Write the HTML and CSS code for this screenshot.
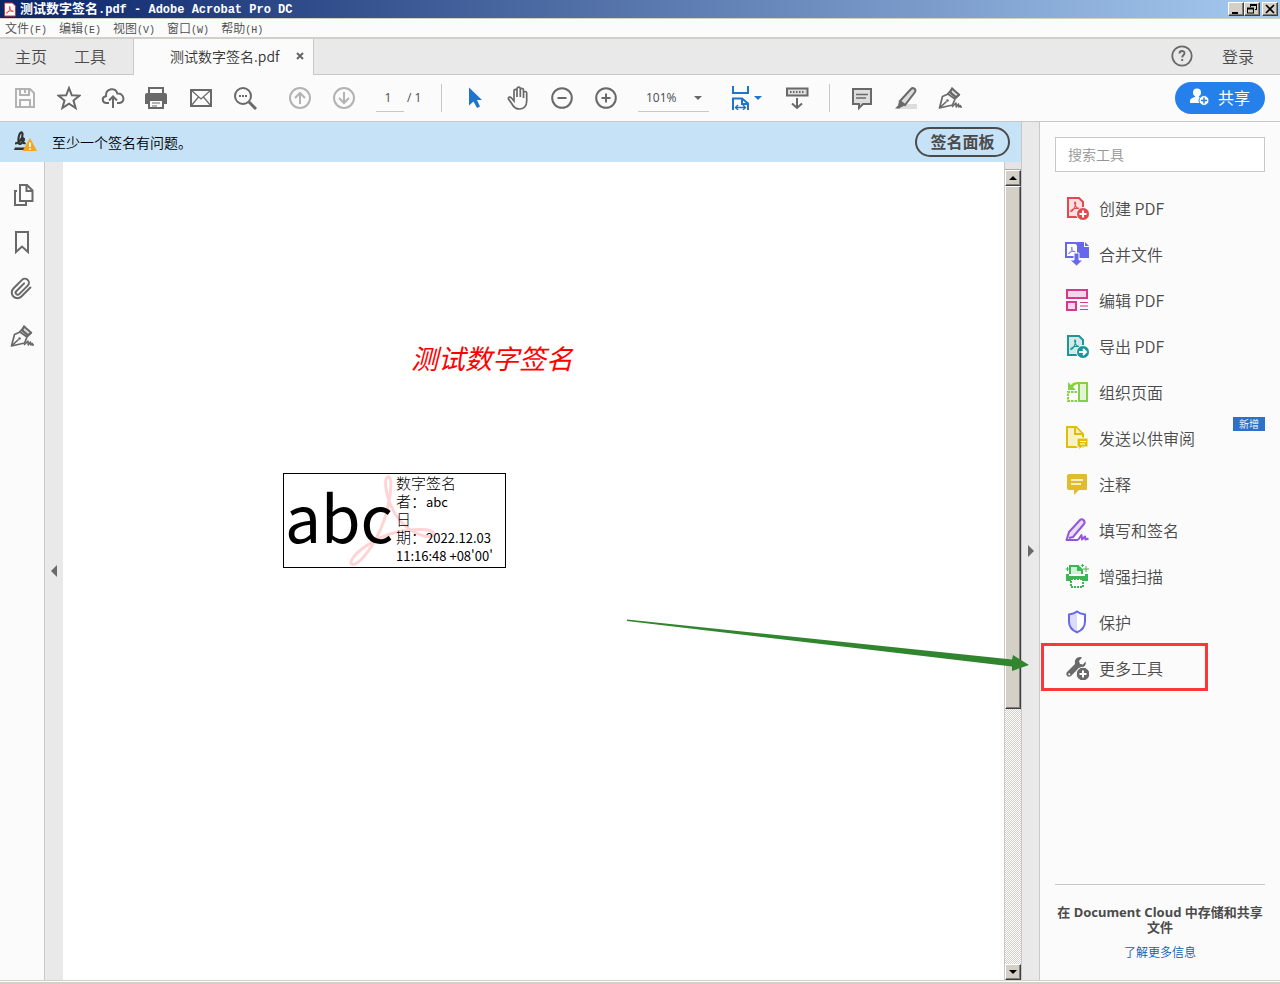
FILE: index.html
```html
<!DOCTYPE html>
<html lang="zh-CN">
<head>
<meta charset="utf-8">
<title>测试数字签名.pdf - Adobe Acrobat Pro DC</title>
<link rel="stylesheet" href="styles.css">
</head>
<body>
<svg class="defs" aria-hidden="true">
  <symbol id="acro" viewBox="0 0 10 10"><path d="M4.600.6c.9 0 .6 2.600-.4 4.600C3.200 7.200 1.600 9.200.8 9c-.8-.6 1.400-2.200 4-2.700 2-.4 4.200-.3 4.300.4.100.8-2-.1-3.200-1.400C4.700 3.900 3.700.7 4.600.6z" fill="none" stroke="currentColor"/></symbol>
  <symbol id="pen" viewBox="0 0 24 24"><path d="M14 2.500l7 6-3 3-6-5z" fill="#ddd"/><path d="M1.500 22l3-11.500L10 8l7 5-2.500 6zM2 21.500l6.500-6M9.500 8L15 2M12 6l6.500 5.500M16.500 13l5-4.500" fill="none" stroke="#696969" stroke-width="1.700" stroke-linejoin="round"/><path d="M14 21l4-4 .2 4 2.300-3 .3 3 1.500-1.500.3 1.500H24" fill="none" stroke="#696969" stroke-width="1.600" stroke-linejoin="round"/><circle cx="9.500" cy="14.500" r="1.300" fill="#696969" stroke="none"/></symbol>
</svg>

<header>
  <div class="titlebar">
    <svg class="app-icon" viewBox="0 0 12 14"><path d="M.5.5h8l3 3v10H.5z" fill="#fff" stroke="#d33"/><use href="#acro" x="2" y="3" width="8" height="9" color="#e22"/></svg>
    <h1>测试数字签名<span>.pdf - Adobe Acrobat Pro DC</span></h1>
    <div class="window-buttons">
      <button class="bevel" aria-label="最小化"><svg viewBox="0 0 12 10"><path d="M2 8h6v2H2z"/></svg></button>
      <button class="bevel" aria-label="还原"><svg viewBox="0 0 12 10"><path d="M4 0h7v6H9V5h1V2H5v1H4zM1 3.500h7v6H1zm1 2v3h5v-3z" fill-rule="evenodd"/></svg></button>
      <button class="bevel close" aria-label="关闭"><svg viewBox="0 0 12 10"><path d="M2 1l8 8M10 1L2 9" stroke="#000" stroke-width="1.700"/></svg></button>
    </div>
  </div>
  <nav class="menubar">
    <button>文件<span>(F)</span></button><button>编辑<span>(E)</span></button><button>视图<span>(V)</span></button><button>窗口<span>(W)</span></button><button>帮助<span>(H)</span></button>
  </nav>
  <div class="tabs">
    <div class="tabs-home"><button>主页</button><button>工具</button></div>
    <div class="tab-active"><span>测试数字签名.pdf</span><button aria-label="关闭标签"><svg viewBox="0 0 8 8"><path d="M1 1l6 6M7 1L1 7" stroke="#666" stroke-width="2"/></svg></button></div>
    <div class="tabs-end">
      <button class="help" aria-label="帮助"><svg viewBox="0 0 22 22"><circle cx="11" cy="11" r="9.700" fill="none" stroke="#6a6a6a" stroke-width="1.800"/><path d="M8.500 8.500c0-3.300 5-3.100 5-.3 0 1.800-2.300 1.900-2.300 4.300M11.200 14v2" fill="none" stroke="#6a6a6a" stroke-width="1.900"/></svg></button>
      <button>登录</button>
    </div>
  </div>
</header>

<div class="toolbar">
  <button class="tool" aria-label="保存"><svg class="faint" viewBox="0 0 24 24"><path d="M3 3h14l4 4v14H3zM7 3v6h9V3M7 21v-7h10v7" /><path d="M12 4v3"/></svg></button>
  <button class="tool" aria-label="收藏"><svg viewBox="0 0 24 24"><path d="M12 2l2.800 7.300 7.700.3-6 4.900 2.100 7.500-6.600-4.300L5.400 22l2.100-7.500-6-4.900 7.700-.3z"/></svg></button>
  <button class="tool" aria-label="上传"><svg viewBox="0 0 24 24"><path d="M8 17H5.500C1 17 .3 10.800 5 10.200 4.500 2 15 .8 16.300 7.500c7.200-.6 8.300 9.500 2 9.500H16M12 22V10.500M8 14.500l4-4 4 4"/></svg></button>
  <button class="tool" aria-label="打印"><svg viewBox="0 0 24 24"><path d="M4 7V2h14v5" /><path d="M0 9q0-2 2-2h18q2 0 2 2v9h-4v-4H4v4H0z" fill="#696969" stroke="none"/><path d="M4 14h14v8H4z" fill="#fff"/><path d="M7 17h8M7 20h5" stroke-width="1"/></svg></button>
  <button class="tool" aria-label="邮件"><svg viewBox="0 0 24 24"><path d="M2 4h20v16H2z"/><path d="M2 4l10 9 10-9M2 20l7.500-9M22 20l-7.500-9" stroke-width="1.200"/></svg></button>
  <button class="tool search" aria-label="查找"><svg viewBox="0 0 24 24"><circle cx="10" cy="10" r="8"/><path d="M16 16l7 7" stroke-width="3"/><path d="M6 10h2m1 0h2m1 0h2" /></svg></button>
  <button class="tool" aria-label="上一页"><svg class="faint" viewBox="0 0 24 24"><circle cx="12" cy="12" r="10"/><path d="M12 18V7M7 12l5-5 5 5"/></svg></button>
  <button class="tool" aria-label="下一页"><svg class="faint" viewBox="0 0 24 24"><circle cx="12" cy="12" r="10"/><path d="M12 6v11M7 12l5 5 5-5"/></svg></button>
  <label class="page-no"><input type="text" value="1" aria-label="页码"><span>/ 1</span></label>
  <i class="sep"></i>
  <button class="tool" aria-label="选择"><svg viewBox="0 0 24 24"><path d="M7 1.500v18l4.500-4 3.500 6.500 3-1.500-3-6.500h5z" fill="#1f74cc" stroke="none"/></svg></button>
  <button class="tool" aria-label="抓手"><svg viewBox="0 0 24 24"><path d="M8 12V5c0-2.300 3-2.300 3 0v6V3c0-2.500 3.300-2.500 3.300 0v8V4c0-2.200 3.200-2.200 3.200 0v8V7c0-2 3.200-2 3.200 0v8c0 5-3 8-7.200 8-4 0-6-2-7.500-5L2.500 13c-.6-2 1.700-2.700 3-1l2.500 3z" stroke-width="1.700"/></svg></button>
  <button class="tool" aria-label="缩小"><svg viewBox="0 0 24 24"><circle cx="12" cy="12" r="9.800"/><path d="M7.500 12h9"/></svg></button>
  <button class="tool" aria-label="放大"><svg viewBox="0 0 24 24"><circle cx="12" cy="12" r="9.800"/><path d="M7.500 12h9M12 7.500v9"/></svg></button>
  <div class="zoom"><select aria-label="缩放比例"><option>101%</option></select></div>
  <button class="tool fit" aria-label="适合宽度"><svg viewBox="0 0 24 24"><path d="M4 0v7h15V0M4 24V12.500h9l6 5V24M13 12.500V18h6" stroke="#1f74cc"/><path d="M6.500 21.500h10M9 19l-2.500 2.500L9 24M14 19l2.500 2.500L14 24" stroke="#1f74cc" stroke-width="1.400"/></svg></button>
  <button class="tool" aria-label="工具栏"><svg viewBox="0 0 24 24"><path d="M2 2.500h20.500v7H2z" fill="#ddd"/><path d="M5 6h15" stroke-dasharray="1.500 1.500"/><path d="M12 12v10M7 17.500l5 4.500 5-4.500"/></svg></button>
  <i class="sep"></i>
  <button class="tool" aria-label="注释"><svg viewBox="0 0 24 24"><path d="M3 3h18v15h-8l-4 4v-4H3z" fill="#ddd"/><path d="M6 8.500h12M6 12h10" stroke-width="1.300"/></svg></button>
  <button class="tool" aria-label="荧光笔"><svg viewBox="0 0 24 24"><path d="M8 18h15v5H3z" fill="#ddd" stroke="none"/><path d="M6 15L17 3c2-2 5.500 0 4 3L11 19z" fill="#ddd"/><path d="M5 15l6 4-3 2-1 0-1.500 1.500H1l3-3z" fill="#696969" stroke="none"/></svg></button>
  <button class="tool" aria-label="签名"><svg viewBox="0 0 24 24"><use href="#pen"/></svg></button>
  <button class="share"><svg viewBox="0 0 20 18"><circle cx="7" cy="4.500" r="4"/><path d="M0 13.500c0-3 2-3.500 5-4.500V7h4v2l3 1-2 5H0z"/><circle cx="14" cy="12.500" r="5" stroke="#2680eb"/><path d="M11 12.500h6M14 9.500v6" stroke="#2680eb" stroke-width="1.500"/></svg>共享</button>
</div>

<div class="workspace">
  <main>
    <div class="notice">
      <svg viewBox="0 0 24 24"><path d="M2 17.500h12v2.500H1z" fill="#333"/><path d="M2 13.500c4 0 8-5 7.500-9.500C9 .5 6 3 5.500 8s.5 7 2.500 5.500 4-4.500 2.500-5-1.500 6 2 4.500" fill="none" stroke="#333" stroke-width="2.200"/><path d="M17 8l7 13H9.500z" fill="#f8a51b"/><path d="M17 12.500v4.500M17 18.200v1.500" stroke="#fff" stroke-width="1.800"/></svg>
      <p>至少一个签名有问题。</p>
      <button>签名面板</button>
    </div>
    <div class="viewer">
      <nav class="rail">
        <button aria-label="页面"><svg viewBox="0 0 24 24"><path d="M7 8H5v14h11v-3"/><path d="M10 2h7l5.500 5.500V18H10zM16.500 2v6h6" fill="#fbfbfb"/></svg></button>
        <button aria-label="书签"><svg viewBox="0 0 24 24"><path d="M6 2h12v20l-6-5.500L6 22z"/></svg></button>
        <button aria-label="附件"><svg viewBox="0 0 24 24"><path d="M20.400 10.500l-9 9a5.600 5.600 0 0 1-8-8l8.600-8.600a4 4 0 0 1 5.700 5.700l-8.500 8.500a2 2 0 0 1-2.900-2.900l7.800-7.800" stroke-linecap="round"/></svg></button>
        <button aria-label="签名"><svg viewBox="0 0 24 24"><use href="#pen"/></svg></button>
      </nav>
      <button class="gutter" aria-label="折叠导航窗格"><svg viewBox="0 0 6 12"><path d="M6 0v12L0 6z"/></svg></button>
      <article class="page">
        <h2>测试数字签名</h2>
        <section class="signature">
          <svg class="mark" viewBox="0 0 90 94"><path d="M40 3c6-2 2 32-8 54S8 94 3 91c-4-6 20-27 49-33 16-3 35-3 34 3-2 6-22 0-34-14C39 32 34 4 40 3z" fill="none" stroke="#ffd4d4" stroke-width="3"/></svg>
          <strong>abc</strong>
          <p><span>数字签名</span><br><span>者：</span>abc<br><span>日</span><br><span>期：</span>2022.12.03<br>11:16:48 +08'00'</p>
        </section>
      </article>
      <div class="scrollbar">
        <i class="splitter"></i>
        <button class="bevel" aria-label="向上滚动"><svg viewBox="0 0 8 4"><path d="M4 0l4 4H0z"/></svg></button>
        <i class="bevel thumb"></i>
        <i class="track"></i>
        <button class="bevel" aria-label="向下滚动"><svg viewBox="0 0 8 4"><path d="M0 0h8L4 4z"/></svg></button>
      </div>
    </div>
  </main>
  <button class="gutter right" aria-label="折叠工具窗格"><svg viewBox="0 0 6 12"><path d="M0 0v12l6-6z"/></svg></button>
  <aside>
    <input class="tool-search" type="search" placeholder="搜索工具" aria-label="搜索工具">
    <ul class="tool-list">
      <li><button><svg viewBox="0 0 24 24"><path d="M3 2h11l4 4v15H3z" fill="#fae0e0" stroke="#e34850" stroke-width="2"/><use href="#acro" x="5" y="5" width="11" height="12" color="#e34850"/><circle cx="18" cy="18" r="6.500" fill="#e34850" stroke="#fbfbfb"/><path d="M14.500 18h7M18 14.500v7" stroke="#fff" stroke-width="2"/></svg>创建 PDF</button></li>
      <li><button><svg viewBox="0 0 24 24"><path d="M1 1h10l2 2v12H1z" fill="#fff" stroke="#6767ec" stroke-width="2"/><path d="M12 0h7v5h5v11H13zM20 0l4 4h-4z" fill="#6767ec"/><use href="#acro" x="3" y="4" width="8" height="9" color="#6767ec"/><path d="M9 11h5v7h4l-6.500 6L5 18h4z" fill="#6767ec" stroke="#fbfbfb"/></svg>合并文件</button></li>
      <li><button><svg viewBox="0 0 24 24"><path d="M2 2h20v8H2zM2 14h9v8H2z" fill="#f6d5e9" stroke="#d83790" stroke-width="2"/><path d="M15 14.500h8M15 18h8M15 21.500h8" stroke="#d83790"/></svg>编辑 PDF</button></li>
      <li><button><svg viewBox="0 0 24 24"><path d="M3 2h11l4 4v15H3z" fill="#d4e9e8" stroke="#1b959a" stroke-width="2"/><use href="#acro" x="5" y="5" width="11" height="12" color="#1b959a"/><circle cx="18" cy="18" r="6.500" fill="#1b959a" stroke="#fbfbfb"/><path d="M14 18h7M18 15l3 3-3 3" fill="none" stroke="#fff" stroke-width="2"/></svg>导出 PDF</button></li>
      <li><button><svg viewBox="0 0 24 24"><path d="M14 3h8v18h-8z" fill="#e3f3d6" stroke="#85d044" stroke-width="2"/><path d="M12 12H3v9h9" fill="none" stroke="#85d044" stroke-width="2" stroke-dasharray="2.500 1"/><path d="M3 2v8h8L8 7q2-3 5-3V2Q8 2 6 5z" fill="#85d044"/></svg>组织页面</button></li>
      <li><button><svg viewBox="0 0 24 24"><path d="M2 1h9l7 7v13H2z" fill="#f8f0c6" stroke="#dfbf00" stroke-width="2"/><path d="M10 1v7h7" fill="#f8f0c6" stroke="#dfbf00" stroke-width="2"/><path d="M12 12h11v9h-6l-3 3v-3h-2z" fill="#dfbf00" stroke="#fbfbfb"/><path d="M15 15.500h6M15 18h5" stroke="#fff"/></svg>发送以供审阅</button><span class="badge">新增</span></li>
      <li><button><svg viewBox="0 0 24 24"><path d="M4 2h17q1 0 1 1v14q0 1-1 1h-7l-5 5v-5H4q-2 0-2-2V3z" fill="#e0be2b"/><path d="M6 8h12M6 12h10" stroke="#fff" stroke-width="1.600"/></svg>注释</button></li>
      <li><button><svg viewBox="0 0 24 24"><path d="M1.500 22l2.500-8L15 2c2-2 6 1 4 4L8 19z" fill="#eadcf8"/><path d="M13 22H1.500l2.500-8L15 2c2-2 6 1 4 4L8 19l-4 1M13 22l3.500-5 .5 4.500 3-3 .5 3 3-1" fill="none" stroke="#9256d9" stroke-width="2" stroke-linejoin="round"/></svg>填写和签名</button></li>
      <li><button><svg viewBox="0 0 24 24"><path d="M5 10V2h8l4 4v4" fill="#d4edda" stroke="#3eb553" stroke-width="2"/><path d="M12 2v5h5z" fill="#3eb553"/><path d="M1 10h3v2h16v-2h3v7H1z" fill="#3eb553"/><path d="M6 15h12v8H6z" fill="#fff" stroke="#3eb553" stroke-width="2" stroke-dasharray="2 1"/><path d="M21 2v6M18 5h6M2.500 3v4M.5 5h4M17.500 0v3M16 1.500h3" stroke="#3eb553"/></svg>增强扫描</button></li>
      <li><button><svg viewBox="0 0 24 24"><path d="M12 1.500c2.500 2 5 2.500 8 3v7c0 5-3.500 9-8 10.800C7.500 20.500 4 16.500 4 11.500v-7c3-.5 5.500-1 8-3z" fill="#fff"/><path d="M12 1.500v20.800C7.500 20.500 4 16.500 4 11.500v-7z" fill="#dcdcfa"/><path d="M12 1.500c2.500 2 5 2.500 8 3v7c0 5-3.500 9-8 10.800C7.500 20.500 4 16.500 4 11.500v-7c3-.5 5.500-1 8-3z" fill="none" stroke="#6767ec" stroke-width="2"/></svg>保护</button></li>
      <li class="more"><button><svg viewBox="0 0 24 24"><path d="M2 16l8-8c-1-5 3-8 7-6.500L14 5l1 3 3 .5 2.500-3C22 9 18 13 14 12l-8 8c-3 2-6-1-4-4z" fill="#696969"/><circle cx="4.300" cy="18.300" r="1" fill="#fff"/><circle cx="18" cy="18" r="6.800" fill="#696969" stroke="#fbfbfb"/><path d="M14.500 18h7M18 14.500v7" stroke="#fff" stroke-width="2"/></svg>更多工具</button>
        <i class="highlight"></i>
        <svg class="arrow" viewBox="0 0 402 55"><path d="M0 .5l385 40 1-4.500 16 10-17 6v-4.500L0 2z" fill="#31852f"/></svg>
      </li>
    </ul>
    <footer>
      <p>在 Document Cloud 中存储和共享文件</p>
      <a href="#">了解更多信息</a>
    </footer>
  </aside>
</div>
<div class="window-edge"></div>
</body>
</html>
```
FILE: styles.css
```css
* { box-sizing: border-box; }
body {
  margin: 0;
  height: 100vh;
  display: flex;
  flex-direction: column;
  background: #fbfbfb;
  color: #4b4b4b;
  font: 350 16px/24px "Noto Sans CJK SC", sans-serif;
  overflow: hidden;
}
button { padding: 0; border: 0; background: none; color: inherit; font: inherit; white-space: nowrap; }
svg { display: block; flex: none; }
h1, h2, p, ul { margin: 0; padding: 0; }
.defs { position: absolute; width: 0; height: 0; }

.titlebar {
  display: flex;
  align-items: center;
  height: 19px;
  padding: 0 2px 0 4px;
  background: linear-gradient(90deg, #0a246a, #a6caf0);
  border-bottom: 1px solid #d4d0c8;
}
.app-icon { width: 12px; height: 15px; }
.titlebar h1 { flex: 1; margin-left: 4px; color: #fff; font-size: 13px; line-height: 18px; }
.titlebar h1 span { font-family: "Liberation Mono", monospace; font-size: 12px; }
.window-buttons { display: flex; }
.bevel {
  display: flex;
  align-items: center;
  justify-content: center;
  background: #d4d0c8;
  border: 1px solid;
  border-color: #fff #404040 #404040 #fff;
  box-shadow: inset -1px -1px #808080;
}
.window-buttons .bevel { width: 16px; height: 14px; }
.window-buttons svg { width: 12px; height: 10px; }
.window-buttons .close { margin-left: 2px; }

.menubar {
  display: flex;
  gap: 12px;
  height: 20px;
  padding-left: 5px;
  border-bottom: 2px solid #d0cfc8;
  font-size: 12px;
  line-height: 18px;
}
.menubar span { font-family: "Liberation Mono", monospace; font-size: 10px; }

.tabs { display: flex; height: 36px; background: #e9e9e9; }
.tabs-home { display: flex; gap: 27px; width: 133px; padding-left: 15px; padding-bottom: 2px; border-bottom: 1px solid #c8c8c8; }
.tab-active {
  display: flex;
  align-items: center;
  justify-content: space-between;
  width: 181px;
  padding: 0 9px 2px 36px;
  background: #fbfbfb;
  border: solid #c8c8c8;
  border-width: 0 1px;
  color: #333;
  font-size: 14px;
}
.tab-active svg { width: 8px; height: 8px; }
.tabs-end {
  flex: 1;
  display: flex;
  align-items: center;
  justify-content: flex-end;
  gap: 29px;
  padding: 0 26px 2px 0;
  border-bottom: 1px solid #c8c8c8;
}
.help svg { width: 22px; height: 22px; }

.toolbar {
  display: flex;
  align-items: center;
  gap: 20px;
  height: 47px;
  flex: none;
  padding: 0 15px 0 13px;
  border-bottom: 1px solid #c8c8c8;
  font: 12px/24px "Open Sans", sans-serif;
}
.tool { flex: none; }
.tool svg { width: 24px; height: 24px; fill: none; stroke: #696969; stroke-width: 2; }
.tool .faint { stroke: #b3b3b3; }
.search { margin-right: 11px; }
.page-no { display: flex; gap: 3px; width: 45px; }
.page-no input {
  width: 28px;
  height: 28px;
  padding: 0 4px 0 0;
  border: 0;
  border-bottom: 1px solid #c8c8c8;
  background: none;
  color: inherit;
  font: inherit;
  text-align: center;
}
.page-no span { line-height: 28px; white-space: nowrap; }
.sep { width: 1px; height: 28px; background: #c8c8c8; }
.zoom { position: relative; width: 71px; border-bottom: 1px solid #c8c8c8; }
.zoom select {
  width: 100%;
  height: 27px;
  padding: 0 8px;
  border: 0;
  appearance: none;
  background: none;
  color: inherit;
  font: inherit;
}
.zoom::after, .fit::after { content: ""; border: 4px solid transparent; border-top-color: #696969; border-bottom: 0; }
.zoom::after { position: absolute; right: 7px; top: 12px; pointer-events: none; }
.fit { display: flex; align-items: center; justify-content: space-between; width: 36px; }
.fit::after { border-top-color: #1f74cc; margin-right: 3px; }
.share {
  display: flex;
  align-items: center;
  justify-content: center;
  gap: 8px;
  width: 90px;
  height: 32px;
  padding-bottom: 2px;
  margin-left: auto;
  border-radius: 16px;
  background: #2680eb;
  color: #fff;
  font: 400 16px/24px "Noto Sans CJK SC", sans-serif;
}
.share svg { width: 20px; height: 18px; fill: #fff; }

.workspace { flex: 1; display: flex; min-height: 0; }
main { flex: 1; display: flex; flex-direction: column; min-width: 0; }
.notice {
  display: flex;
  align-items: center;
  height: 40px;
  padding: 0 11px 0 13px;
  background: #c6e2f7;
  color: #000;
  font-size: 14px;
}
.notice svg { width: 24px; height: 24px; margin-right: 15px; }
.notice p { flex: 1; }
.notice button {
  width: 95px;
  height: 30px;
  padding-bottom: 2px;
  border: 2px solid #4b4b4b;
  border-radius: 15px;
  color: #4b4b4b;
  font-size: 16px;
  font-weight: 700;
}
.viewer { flex: 1; display: flex; min-height: 0; }
.rail {
  display: flex;
  flex-direction: column;
  gap: 23px;
  width: 44px;
  padding: 21px 10px;
}
.rail svg { width: 24px; height: 24px; fill: none; stroke: #696969; stroke-width: 2; }
.gutter {
  display: flex;
  align-items: center;
  justify-content: center;
  width: 19px;
  background: #e9e9e9;
  border-left: 1px solid #c8c8c8;
}
.gutter svg { width: 6px; height: 12px; fill: #696969; }
.gutter.right { border-right: 1px solid #c8c8c8; }
.page { flex: 1; padding-top: 180px; background: #fff; }
.page h2 { margin-left: 348px; color: #f00; font-size: 27px; font-style: italic; font-weight: 400; line-height: 32px; }
.signature {
  position: relative;
  display: flex;
  width: 223px;
  height: 95px;
  margin: 99px 0 0 220px;
  border: 1px solid #000;
  color: #000;
}
.signature strong { position: relative; width: 112px; padding-left: 1px; font-size: 64px; font-weight: 400; line-height: 82px; }
.signature p { position: relative; padding-top: 1px; font-size: 13px; font-weight: 400; line-height: 18px; white-space: nowrap; }
.signature p span { font-family: "Liberation Sans", "Noto Sans CJK SC", sans-serif; font-size: 15px; font-weight: 300; line-height: 0; }
.mark { position: absolute; left: 64px; top: 0; width: 90px; height: 93px; }

.scrollbar { display: flex; flex-direction: column; width: 17px; border-left: 1px solid #c8c8c8; }
.scrollbar svg { width: 8px; height: 4px; }
.scrollbar button { height: 16px; flex: none; }
.splitter { height: 8px; background: #e4e4e4; border-bottom: 1px solid #aaa; }
.thumb { flex: 522; }
.track { flex: 256; background: repeating-conic-gradient(#d4d0c8 0 25%, #fff 0 50%) 0 0 / 2px 2px; }

aside { display: flex; flex-direction: column; width: 240px; padding: 15px; }
.tool-search {
  width: 100%;
  height: 35px;
  padding: 0 12px 2px;
  border: 1px solid #c8c8c8;
  background: #fff;
  font: 350 14px "Noto Sans CJK SC", sans-serif;
}
.tool-search::placeholder { color: #959595; }
.tool-list { margin-top: 13px; list-style: none; }
.tool-list li { position: relative; height: 46px; }
.tool-list button { display: flex; align-items: center; gap: 10px; width: 100%; height: 46px; padding: 0 0 1px 10px; }
.tool-list button svg { width: 24px; height: 24px; }
.badge {
  position: absolute;
  right: 0;
  top: 2px;
  width: 32px;
  background: #2c72cb;
  color: #fff;
  font-size: 10px;
  line-height: 14px;
  text-align: center;
}
.highlight { position: absolute; left: -14px; top: -2px; width: 167px; height: 48px; border: 3px solid #fc3737; pointer-events: none; }
.arrow { position: absolute; right: 236px; top: -26px; width: 402px; height: 55px; pointer-events: none; }
footer {
  margin-top: auto;
  padding: 20px 0 1px;
  border-top: 1px solid #c8c8c8;
  font-size: 12px;
  text-align: center;
}
footer p { margin-bottom: 5px; font: 700 13px/15px "Noto Sans", "Noto Sans CJK SC", sans-serif; }
footer a { display: block; line-height: 24px; color: #0c5cb4; text-decoration: none; }
.window-edge { flex: none; height: 4px; background: #d4d0c8; border-top: 1px solid #d4d0c8; box-shadow: inset 0 1px #fff; }
```
